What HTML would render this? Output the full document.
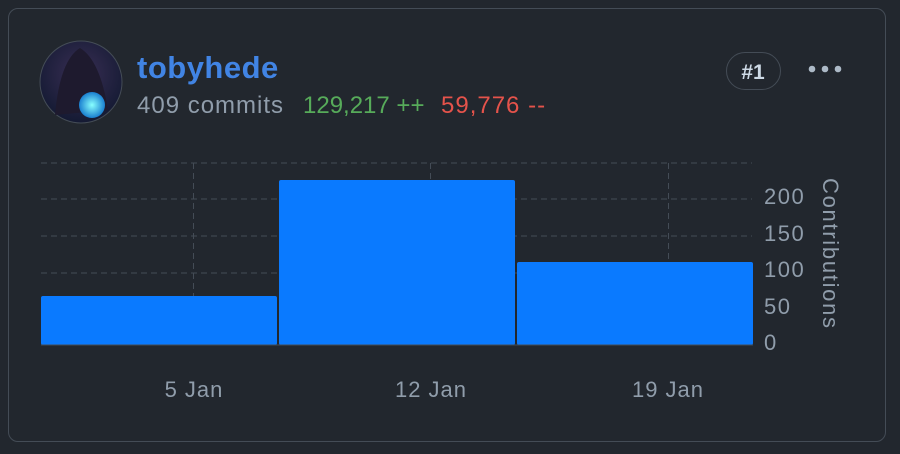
<!DOCTYPE html>
<html><head><style>
body{margin:0;width:900px;height:454px;background:#22272e;font-family:"Liberation Sans",sans-serif;overflow:hidden;position:relative}
.card{position:absolute;left:8px;top:8px;width:878px;height:434px;border:1px solid #444c56;border-radius:10px;box-sizing:border-box}
.t{position:absolute;white-space:nowrap;font-size:24px;top:92px}
</style></head><body>
<div class="card"></div>
<svg width="900" height="454" style="position:absolute;left:0;top:0">
<defs><radialGradient id="av" cx="50%" cy="40%" r="60%"><stop offset="0" stop-color="#3a2f55"/><stop offset="1" stop-color="#141a33"/></radialGradient>
<radialGradient id="orb" cx="50%" cy="50%" r="50%"><stop offset="0" stop-color="#8ff"/><stop offset="1" stop-color="#1a7fd0"/></radialGradient></defs>
<circle cx="81" cy="82" r="41" fill="url(#av)" stroke="#444c56" stroke-width="1"/>
<path d="M55 115 Q60 60 80 48 Q100 60 108 110 Z" fill="#1e1a2e"/>
<circle cx="92" cy="105" r="13" fill="url(#orb)"/>
<g stroke="#444c56" stroke-width="1" stroke-dasharray="6,4">
<line x1="41" y1="163" x2="752" y2="163"/><line x1="41" y1="199" x2="752" y2="199"/>
<line x1="41" y1="236" x2="752" y2="236"/><line x1="41" y1="273" x2="752" y2="273"/>
<line x1="193.5" y1="163" x2="193.5" y2="344"/><line x1="430.5" y1="163" x2="430.5" y2="344"/><line x1="668.5" y1="163" x2="668.5" y2="344"/>
</g>
<rect x="41" y="296" width="236" height="49" rx="2" fill="#0a7aff"/>
<rect x="279" y="180" width="236" height="165" rx="2" fill="#0a7aff"/>
<rect x="517" y="262" width="236" height="83" rx="2" fill="#0a7aff"/>
<line x1="41" y1="345" x2="753" y2="345" stroke="#444c56"/>
<g fill="#adbac7"><circle cx="812" cy="69" r="3.3"/><circle cx="825" cy="69" r="3.3"/><circle cx="838" cy="69" r="3.3"/></g>
<rect x="726.5" y="52.5" width="54" height="37" rx="18.5" fill="none" stroke="#444c56"/>
<g fill="#909dab" font-size="22" letter-spacing="1.5" font-family="Liberation Sans,sans-serif">
<text x="764" y="204">200</text><text x="764" y="241">150</text><text x="764" y="277">100</text><text x="764" y="314">50</text><text x="764" y="350">0</text>
</g>
<g fill="#909dab" font-size="22" letter-spacing="1" font-family="Liberation Sans,sans-serif">
<text x="194" y="397" text-anchor="middle">5 Jan</text><text x="431" y="397" text-anchor="middle">12 Jan</text><text x="668" y="397" text-anchor="middle">19 Jan</text>
<text transform="translate(823,178) rotate(90)" letter-spacing="1.7">Contributions</text>
</g>
<text x="753" y="79" text-anchor="middle" fill="#cdd9e5" font-size="21" font-weight="bold" font-family="Liberation Sans,sans-serif">#1</text>
</svg>
<div class="t" style="left:137px;top:50px;font-size:31px;letter-spacing:0.5px;font-weight:bold;color:#4184e4">tobyhede</div>
<div class="t" style="left:137px;color:#909dab;letter-spacing:1px">409 commits</div>
<div class="t" style="left:303px;color:#57ab5a">129,217 ++</div>
<div class="t" style="left:441px;color:#e5534b;letter-spacing:1px">59,776 --</div>
</body></html>
